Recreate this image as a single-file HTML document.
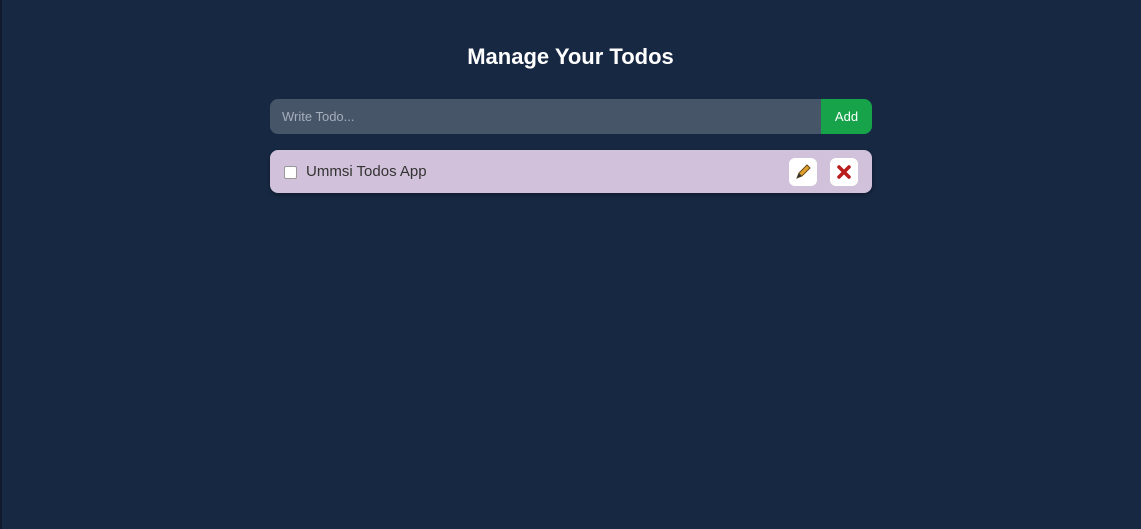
<!DOCTYPE html>
<html><head><style>
html,body{margin:0;padding:0;}
body{width:1141px;height:529px;background:#172842;font-family:"Liberation Sans",sans-serif;position:relative;overflow:hidden;}
.edge{position:absolute;left:0;top:0;width:2px;height:529px;background:#0f1a2e;}
h1{position:absolute;top:44px;left:0;width:1141px;text-align:center;margin:0;font-size:22px;color:#fff;font-weight:bold;}
.inp{position:absolute;left:270px;top:99px;width:551px;height:35px;background:#475569;border-radius:8px 0 0 8px;color:#a5aebb;font-size:13px;line-height:35px;padding-left:12px;box-sizing:border-box;}
.add{position:absolute;left:821px;top:99px;width:51px;height:35px;background:#16a34a;border-radius:0 8px 8px 0;color:#fff;font-size:13px;line-height:35px;text-align:center;}
.item{position:absolute;left:270px;top:150px;width:602px;height:43px;background:#d1c1da;border-radius:8px;box-shadow:0 2px 4px rgba(0,0,0,.3);}
.cb{position:absolute;left:14px;top:16px;width:11px;height:11px;background:#fff;border-radius:2px;border:1px solid #999;}
.txt{position:absolute;left:36px;top:13px;font-size:15px;color:#333;}
.btn{position:absolute;top:8px;width:28px;height:28px;background:#fff;border-radius:6px;}
</style></head><body>
<div class="edge"></div>
<h1>Manage Your Todos</h1>
<div class="inp">Write Todo...</div>
<div class="add">Add</div>
<div class="item">
<div class="cb"></div>
<div class="txt">Ummsi Todos App</div>
<div class="btn" style="left:519px"><svg width="28" height="28" viewBox="0 0 28 28"><path d="M8 20 L10 15 L18 7 L21 10 L13 18 Z" fill="#e0a030" stroke="#6b4a10" stroke-width="1"/><path d="M8 20 L10 15 L13 18 Z" fill="#333"/></svg></div>
<div class="btn" style="left:560px"><svg width="28" height="28" viewBox="0 0 28 28"><path d="M9 9 L19 19 M19 9 L9 19" stroke="#b91c1c" stroke-width="3.5" stroke-linecap="round"/></svg></div>
</div>
</body></html>
